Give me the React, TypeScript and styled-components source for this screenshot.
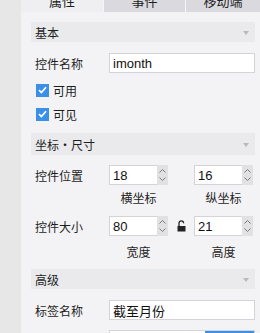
import React from "react";
import styled, { createGlobalStyle } from "styled-components";

const GlobalStyle = createGlobalStyle`
	html, body {
		margin: 0;
		padding: 0;
		width: 260px;
		height: 333px;
		overflow: hidden;
		background: #e7e7e7;
	}
	* { box-sizing: border-box; }
`;

const FONT = `"Liberation Sans", "Noto Sans CJK SC", sans-serif`;

const Page = styled.div`
	display: flex;
	width: 260px;
	height: 333px;
	overflow: hidden;
	font-family: ${FONT};
	color: #1e1e1e;
`;

const SideStrip = styled.div`
	width: 21px;
	flex-shrink: 0;
	background: #e7e7e7;
`;

const Panel = styled.div`
	flex: 1;
	background: #f3f3f5;
	display: flex;
	flex-direction: column;
`;

/* the panel is scrolled a little, so the tab bar sits half above the top edge */
const Tabs = styled.div`
	display: flex;
	height: 24px;
	margin-top: -12px;
	flex-shrink: 0;
`;

const Tab = styled.div<{ active?: boolean; w: number }>`
	width: ${p => p.w}px;
	display: flex;
	align-items: center;
	justify-content: center;
	font-size: 13px;
	background: ${p => (p.active ? "#efeff1" : "#dadade")};
	border-left: ${p => (p.active ? "none" : "1px solid #f6f6f8")};
`;

const Content = styled.div`
	padding: 10px 5px 0 10px;
	display: flex;
	flex-direction: column;
`;

const SectionHeader = styled.div<{ h?: number; mt?: number }>`
	height: ${p => p.h ?? 20}px;
	margin-top: ${p => p.mt ?? 0}px;
	flex-shrink: 0;
	background: #eaeaec;
	display: flex;
	align-items: center;
	justify-content: space-between;
	padding: 0 6px 0 4px;
	font-size: 12px;
`;

const Caret = styled.span`
	width: 0;
	height: 0;
	border-left: 3.5px solid transparent;
	border-right: 3.5px solid transparent;
	border-top: 4px solid #b9b9bd;
	margin-top: 2px;
`;

const Row = styled.div<{ mt: number }>`
	display: flex;
	align-items: center;
	height: 20px;
	flex-shrink: 0;
	margin-top: ${p => p.mt}px;
`;

const Label = styled.div`
	width: 78px;
	padding-left: 4px;
	font-size: 12px;
	flex-shrink: 0;
`;

const TextInput = styled.div`
	flex: 1;
	height: 20px;
	background: #fff;
	border: 1px solid #d3d3d8;
	display: flex;
	align-items: center;
	padding-left: 3px;
	font-size: 13px;
	color: #111;
`;

const CheckRow = styled.div<{ mt: number }>`
	display: flex;
	align-items: center;
	gap: 4px;
	margin-top: ${p => p.mt}px;
	padding-left: 5px;
	font-size: 12px;
	height: 14px;
	flex-shrink: 0;
`;

const CheckBox = styled.span`
	width: 13px;
	height: 13px;
	background: #3b8fe7;
	display: flex;
	align-items: center;
	justify-content: center;
`;

const SpinGroup = styled.div`
	display: flex;
	align-items: center;
`;

const Spinner = styled.div`
	display: flex;
	width: 59px;
	height: 20px;
`;

const SpinInput = styled.div`
	flex: 1;
	background: #fff;
	border: 1px solid #d3d3d8;
	border-right: none;
	display: flex;
	align-items: center;
	padding-left: 3px;
	font-size: 13px;
	color: #111;
`;

const SpinButtons = styled.div`
	width: 11px;
	background: #e1e1e4;
	display: flex;
	flex-direction: column;
	align-items: center;
	justify-content: space-around;
	padding: 2px 0;
`;

const Gap = styled.div`
	width: 26px;
	display: flex;
	align-items: center;
	justify-content: center;
`;

const Captions = styled.div<{ mt: number }>`
	display: flex;
	margin-top: ${p => p.mt}px;
	padding-left: 78px;
	font-size: 12px;
	height: 17px;
	flex-shrink: 0;
	align-items: center;
`;

const Caption = styled.div`
	width: 59px;
	text-align: center;
`;

const SplitInput = styled.div`
	flex: 1;
	height: 20px;
	display: flex;
	border: 1px solid #d3d3d8;
	background: #fff;
`;

const BlueButton = styled.div`
	width: 49px;
	margin-left: auto;
	background: #3b8fe7;
`;

const Check = () => (
	<svg width="9" height="8" viewBox="0 0 9 8">
		<path d="M1 4.2 L3.4 6.6 L8 1.2" fill="none" stroke="#fff" strokeWidth="1.7" />
	</svg>
);

const Chevron = ({ up }: { up?: boolean }) => (
	<svg width="7" height="4" viewBox="0 0 7 4">
		<path d={up ? "M0.5 3.5 L3.5 0.5 L6.5 3.5" : "M0.5 0.5 L3.5 3.5 L6.5 0.5"} fill="none" stroke="#7a7a80" strokeWidth="1" />
	</svg>
);

const Lock = () => (
	<svg width="9" height="12" viewBox="0 0 9 12">
		<path d="M2 6 V3.2 A2.3 2.3 0 0 1 6.6 3.2" fill="none" stroke="#222" strokeWidth="1.3" />
		<rect x="0.5" y="6" width="8" height="5.5" fill="#222" />
	</svg>
);

const Spin = ({ value }: { value: string }) => (
	<Spinner>
		<SpinInput>{value}</SpinInput>
		<SpinButtons>
			<Chevron up />
			<Chevron />
		</SpinButtons>
	</Spinner>
);

export default function App() {
	return (
		<Page>
			<GlobalStyle />
			<SideStrip />
			<Panel>
				<Tabs>
					<Tab active w={82}>属性</Tab>
					<Tab w={82}>事件</Tab>
					<Tab w={75}>移动端</Tab>
				</Tabs>
				<Content>
					<SectionHeader>基本<Caret /></SectionHeader>
					<Row mt={11}>
						<Label>控件名称</Label>
						<TextInput>imonth</TextInput>
					</Row>
					<CheckRow mt={10}><CheckBox><Check /></CheckBox>可用</CheckRow>
					<CheckRow mt={10}><CheckBox><Check /></CheckBox>可见</CheckRow>
					<SectionHeader h={22} mt={12}>坐标・尺寸<Caret /></SectionHeader>
					<Row mt={10}>
						<Label>控件位置</Label>
						<SpinGroup>
							<Spin value="18" />
							<Gap />
							<Spin value="16" />
						</SpinGroup>
					</Row>
					<Captions mt={4}><Caption>横坐标</Caption><Gap /><Caption>纵坐标</Caption></Captions>
					<Row mt={10}>
						<Label>控件大小</Label>
						<SpinGroup>
							<Spin value="80" />
							<Gap><Lock /></Gap>
							<Spin value="21" />
						</SpinGroup>
					</Row>
					<Captions mt={7}><Caption>宽度</Caption><Gap /><Caption>高度</Caption></Captions>
					<SectionHeader mt={9}>高级<Caret /></SectionHeader>
					<Row mt={11}>
						<Label>标签名称</Label>
						<TextInput>截至月份</TextInput>
					</Row>
					<Row mt={10}>
						<Label>控件值</Label>
						<SplitInput><BlueButton /></SplitInput>
					</Row>
				</Content>
			</Panel>
		</Page>
	);
}
